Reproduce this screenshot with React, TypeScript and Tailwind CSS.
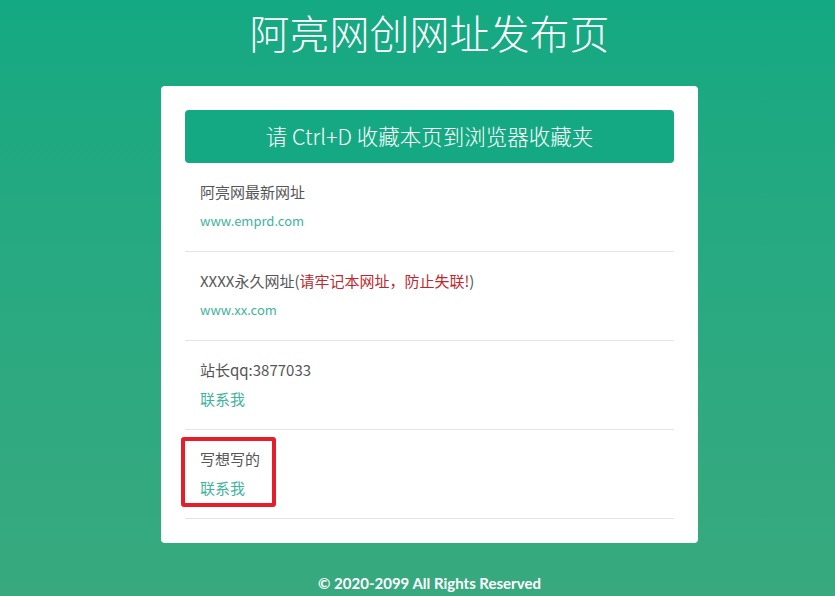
import React from 'react';

const font = { fontFamily: '"Noto Sans CJK SC", "Noto Sans", sans-serif' };

function Row({
  label,
  link,
  linkSize = 'text-[13px]',
  highlight,
}: {
  label: React.ReactNode;
  link: string;
  linkSize?: string;
  highlight?: boolean;
}) {
  return (
    <div className="relative border-b border-[#e5e5e5] px-[15px] pt-[19px] pb-[20px]">
      {highlight && (
        <div className="absolute left-[-4px] top-[7px] h-[70px] w-[95px] rounded-[3px] border-[4px] border-[#e41f2a]" />
      )}
      <div className="h-[20px] text-[15px] leading-[20px] text-[#555]">{label}</div>
      <div className={`mt-[9px] h-[20px] leading-[20px] text-[#3fb39c] ${linkSize}`}>{link}</div>
    </div>
  );
}

export default function App() {
  return (
    <div
      className="min-h-[596px] w-full bg-gradient-to-b from-[#13a982] to-[#38a97f] pl-[24px]"
      style={font}
    >
      <div className="flex flex-col items-center">
        <h1 className="pt-[8px] text-[40px] font-extralight leading-[48px] text-white">阿亮网创网址发布页</h1>

        <div className="mt-[30px] w-[537px] rounded-[4px] bg-white px-[24px] pt-[24px] pb-[24px]">
          <div className="flex h-[53px] items-center justify-center rounded-[4px] bg-[#14a982] text-[21.5px] font-light text-white">
            请 Ctrl+D 收藏本页到浏览器收藏夹
          </div>

          <Row label="阿亮网最新网址" link="www.emprd.com" />
          <Row
            label={
              <>
                XXXX永久网址(<span className="text-[#c1272d]">请牢记本网址，防止失联!</span>)
              </>
            }
            link="www.xx.com"
          />
          <Row label="站长qq:3877033" link="联系我" linkSize="text-[15px]" />
          <Row label="写想写的" link="联系我" linkSize="text-[15px]" highlight />
        </div>

        <p
          className="mt-[31px] text-[15px] font-bold leading-[18px] text-white"
          style={{ fontFamily: 'Lato, "Open Sans", sans-serif' }}
        >
          © 2020-2099 All Rights Reserved
        </p>
      </div>
    </div>
  );
}
